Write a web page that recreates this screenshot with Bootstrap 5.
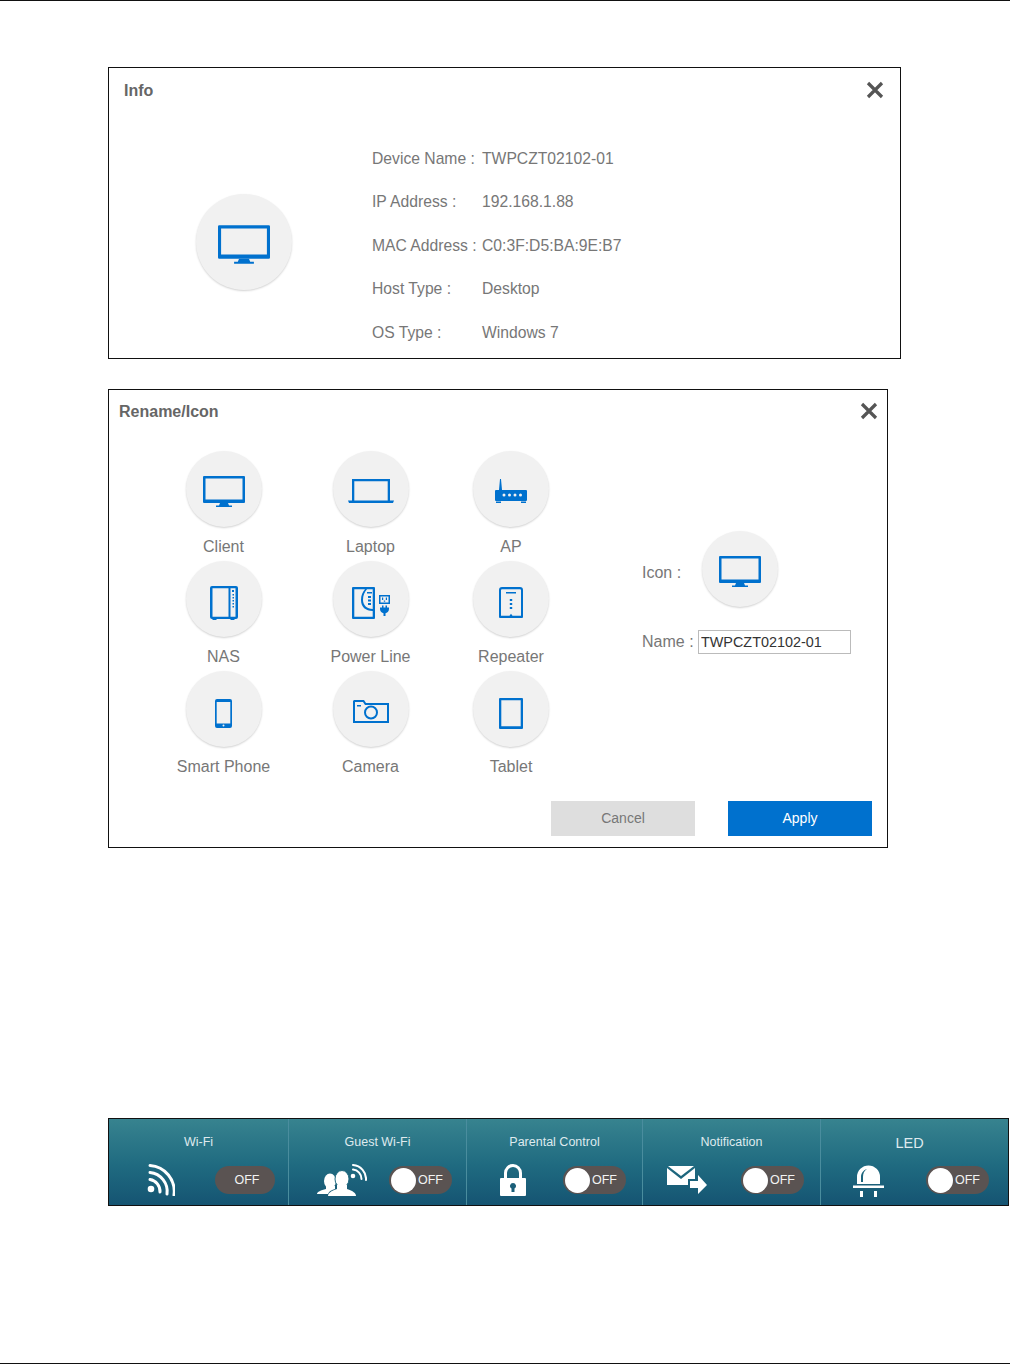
<!DOCTYPE html>
<html lang="en">
  <head>
    <meta charset="UTF-8" />
    <title>Device Info</title>
    <link href="https://cdn.jsdelivr.net/npm/bootstrap@5.3.3/dist/css/bootstrap.min.css" rel="stylesheet" />
    <style>
      body {
        margin: 0;
        background: #fff;
        font-family: "Liberation Sans", Arial, sans-serif;
        font-size: 16px;
        color: #777;
      }
      .page-rule { height: 1px; background: #111; }
      .page-body { padding-left: 108px; }
      .dlg { border: 1px solid #111; background: #fff; }
      .dlg-info { width: 793px; height: 292px; margin-top: 66px; }
      .dlg-rename { width: 780px; height: 459px; margin-top: 30px; }
      .info-head { height: 68px; padding: 13px 16px 0 15px; }
      .rename-head { height: 61px; padding: 12px 9px 0 10px; }
      .dlg-title { font-size: 16px; font-weight: 700; color: #666; line-height: 20px; }
      .close-x { width: 18px; height: 18px; stroke: #555; stroke-width: 3.2; }
      .dev-circle {
        background: #f1f1f1;
        border-radius: 50%;
        box-shadow: 0 1px 2px rgba(0, 0, 0, .18);
        color: #0071ce;
        flex: none;
      }
      .dev-circle svg { fill: currentColor; }
      .circle-lg { width: 96px; height: 96px; margin: 0 80px 7px 87px; padding-top: 6px; }
      .circle-md { width: 76px; height: 76px; margin: 0 1px 5px; padding-top: 4px; }
      .icon-low { margin-top: 4px; }
      .info-text { font-size: 15.7px; margin-top: 1px; }
      .info-row { height: 43.5px; }
      .info-label { width: 110px; }
      .icon-grid {
        display: grid;
        grid-template-columns: 151px 143px 138px;
        grid-auto-rows: 110px;
        margin-left: 39px;
      }
      .icon-cell { line-height: 30px; white-space: nowrap; }
      .side-form { margin-left: 62px; padding-top: 80px; }
      .side-label-a { width: 59px; padding-top: 3px; }
      .side-label-b { width: 56px; }
      .name-row { margin-top: 18px; }
      .name-input {
        width: 153px;
        height: 24px;
        padding: 0 2px;
        border: 1px solid #bbb;
        border-radius: 0;
        font-size: 14.4px;
        line-height: 22px;
        color: #333;
      }
      .dlg-actions { margin-top: 20px; padding-right: 15px; gap: 33px; }
      .act-btn {
        width: 144px;
        height: 35px;
        padding: 0;
        border: 0;
        border-radius: 0;
        font-size: 14px;
        line-height: 35px;
      }
      .act-cancel, .act-cancel:hover { background: #dedede; color: #777; }
      .act-apply, .act-apply:hover { background: #0071ce; color: #fff; }
      .dash {
        width: 901px;
        height: 88px;
        margin-top: 270px;
        border: 1px solid #111;
        background: linear-gradient(#37838f, #1f6a80 55%, #155472);
        color: #fff;
      }
      .dash-cell { border-right: 1px solid #4a8d9e; flex: none; }
      .dash-cell:last-child { border-right: 0; flex: 1; }
      .cell-wifi { width: 180px; }
      .cell-guest { width: 178px; }
      .cell-parent { width: 176px; }
      .cell-notify { width: 178px; }
      .dash-title { height: 45px; padding-top: 14px; font-size: 12.5px; line-height: 18px; color: #dfeaee; text-align: center; }
      .title-led { font-size: 14.5px; padding: 15px 10px 0 0; }
      .dash-row { height: 32px; }
      .dash-row svg { fill: #fff; flex: none; }
      .sw-off {
        position: relative;
        width: 63px;
        height: 28px;
        border-radius: 14px;
        background: #5a5352;
        font-size: 12.5px;
        line-height: 28px;
        text-align: right;
        padding-right: 9px;
        color: #f3f3f3;
        flex: none;
      }
      .sw-bare { width: 60px; padding: 0 0 0 4px; text-align: center; }
      .sw-knob {
        position: absolute;
        left: 2px;
        top: 1.5px;
        width: 25px;
        height: 25px;
        border-radius: 50%;
        background: #fff;
      }
      .row-wifi { padding-left: 38px; gap: 40px; }
      .row-guest { padding-left: 28px; gap: 22px; }
      .row-parent { padding-left: 33px; gap: 37px; }
      .row-notify { padding-left: 24px; gap: 34px; }
      .row-led { padding-left: 32px; gap: 42px; }
      .page-rule-end { margin-top: 157px; }
    </style>
  </head>
  <body>
    <svg width="0" height="0" class="d-block position-absolute">
      <defs>
        <symbol id="ic-monitor" viewBox="0 0 42 31">
          <path fill-rule="evenodd" d="M1 0h40a1 1 0 0 1 1 1v25a1 1 0 0 1-1 1H1a1 1 0 0 1-1-1V1a1 1 0 0 1 1-1zm1.500 2.500v21h37v-21z"/>
          <path d="M17 27h8l1 2.500h3V31H13v-1.500h3z"/>
        </symbol>
        <symbol id="ic-laptop" viewBox="0 0 46 24">
          <path fill-rule="evenodd" d="M4 0h38v22h-2.300V2.300H6.300V22H4z"/>
          <path d="M0 21.500h46l-1 2.500H1z"/>
        </symbol>
        <symbol id="ic-ap" viewBox="0 0 32 24">
          <path d="M5 0h1l1 11H4z"/>
          <path fill-rule="evenodd" d="M1 11h30a1 1 0 0 1 1 1v9a1 1 0 0 1-1 1H1a1 1 0 0 1-1-1v-9a1 1 0 0 1 1-1zm8 3.500a1.500 1.500 0 1 0 0 3 1.500 1.500 0 0 0 0-3zm5.500 0a1.500 1.500 0 1 0 0 3 1.500 1.500 0 0 0 0-3zm5.500 0a1.500 1.500 0 1 0 0 3 1.500 1.500 0 0 0 0-3zm5.500 0a1.500 1.500 0 1 0 0 3 1.500 1.500 0 0 0 0-3z"/>
          <path d="M1 22.500h5V24H1zM26 22.500h5V24h-5z"/>
        </symbol>
        <symbol id="ic-nas" viewBox="0 0 28 34">
          <path fill-rule="evenodd" d="M2 0h24a2 2 0 0 1 2 2v29a2 2 0 0 1-2 2h-1l-1 1h-3l-1-1H7l-1 1H3l-1-1a2 2 0 0 1-2-2V2a2 2 0 0 1 2-2zm.5 2.300v28.400h16V2.300zm18 0v28.400h5V2.300z"/>
          <path d="M22 4h2v2h-2zM22.500 8h1.500v1.500h-1.500zM22.500 11h1.500v1.500h-1.500zM22.500 14h1.500v1.500h-1.500zM22.500 17h1.500v1.500h-1.500zM22.500 20h1.500v1.500h-1.500z"/>
        </symbol>
        <symbol id="ic-powerline" viewBox="0 0 38 32">
          <path fill-rule="evenodd" d="M1 0h21a1 1 0 0 1 1 1v30a1 1 0 0 1-1 1H1a1 1 0 0 1-1-1V1a1 1 0 0 1 1-1zm1.300 2.300v27.400h18.400V24c-7 0-11.700-4-11.700-11 0-4.500 1.500-8 4-10.700zm12.700 0C12.500 5 11 8.500 11 13c0 5 4 9 9.700 9V2.300z"/>
          <path d="M15 5h5v1.500h-5zM16 9h3v2h-3zM16 12.500h3v2h-3zM16 16h3v2h-3z"/>
          <path fill-rule="evenodd" d="M27 8h11v9H27zm1.500 1.500v6h8v-6z"/>
          <path d="M30 10.500h1.200V13H30zM33.800 10.500H35V13h-1.200zM31.800 13.500h1.400v1.200h-1.400z"/>
          <path d="M30 18.500h1.500v2h2v-2H35v2h2V22c0 2.500-2 4-3.500 4.300V29h-2v-2.700C30 26 28 24.500 28 22v-1.500h2z"/>
        </symbol>
        <symbol id="ic-repeater" viewBox="0 0 24 32">
          <path fill-rule="evenodd" d="M3 0h18a3 3 0 0 1 3 3v27a1 1 0 0 1-1 1H1a1 1 0 0 1-1-1V3a3 3 0 0 1 3-3zm0 2.300a1 1 0 0 0-1 1v25.400h8.500l1.500-2 1.500 2H22V3.300a1 1 0 0 0-1-1z"/>
          <path d="M7 5h10v1.500H7zM10.800 12h2.400v2h-2.400zM10.800 16h2.400v2h-2.400zM10.800 20h2.400v2h-2.400z"/>
        </symbol>
        <symbol id="ic-phone" viewBox="0 0 17 29">
          <path fill-rule="evenodd" d="M2 0h13a2 2 0 0 1 2 2v25a2 2 0 0 1-2 2H2a2 2 0 0 1-2-2V2a2 2 0 0 1 2-2zm-.3 3v21.500h13.600V3zM8.500 25.500a1 1 0 1 0 0 2 1 1 0 0 0 0-2z"/>
        </symbol>
        <symbol id="ic-camera" viewBox="0 0 36 24">
          <path fill-rule="evenodd" d="M1 1h10l2 3h23v20H0V2zm1 3v18h32V6H12l-2-3H2z"/>
          <path d="M4 6h4v1.500H4z"/>
          <path fill-rule="evenodd" d="M18 6.500a7 7 0 1 1 0 14 7 7 0 0 1 0-14zm0 2a5 5 0 1 0 0 10 5 5 0 0 0 0-10z"/>
        </symbol>
        <symbol id="ic-tablet" viewBox="0 0 24 31">
          <path fill-rule="evenodd" d="M1 0h22a1 1 0 0 1 1 1v29a1 1 0 0 1-1 1H1a1 1 0 0 1-1-1V1a1 1 0 0 1 1-1zm1.300 2.300v26h19.400v-26z"/>
          <path d="M11 29h2v1h-2z"/>
        </symbol>
      </defs>
    </svg>

    <div class="page-rule"></div>

    <div class="page-body">
      <!-- Info dialog -->
      <div class="dlg dlg-info">
        <div class="info-head d-flex justify-content-between align-items-start">
          <span class="dlg-title">Info</span>
          <svg class="close-x" viewBox="0 0 18 18"><path d="M2 2l14 14M16 2L2 16"/></svg>
        </div>
        <div class="d-flex align-items-center">
          <div class="dev-circle circle-lg d-flex align-items-center justify-content-center">
            <svg width="52" height="39"><use href="#ic-monitor"/></svg>
          </div>
          <div class="info-text">
            <div class="info-row d-flex align-items-center"><span class="info-label">Device Name :</span><span>TWPCZT02102-01</span></div>
            <div class="info-row d-flex align-items-center"><span class="info-label">IP Address :</span><span>192.168.1.88</span></div>
            <div class="info-row d-flex align-items-center"><span class="info-label">MAC Address :</span><span>C0:3F:D5:BA:9E:B7</span></div>
            <div class="info-row d-flex align-items-center"><span class="info-label">Host Type :</span><span>Desktop</span></div>
            <div class="info-row d-flex align-items-center"><span class="info-label">OS Type :</span><span>Windows 7</span></div>
          </div>
        </div>
      </div>

      <!-- Rename/Icon dialog -->
      <div class="dlg dlg-rename">
        <div class="rename-head d-flex justify-content-between align-items-start">
          <span class="dlg-title">Rename/Icon</span>
          <svg class="close-x" viewBox="0 0 18 18"><path d="M2 2l14 14M16 2L2 16"/></svg>
        </div>
        <div class="d-flex">
          <div class="icon-grid">
            <div class="icon-cell d-flex flex-column align-items-center">
              <div class="dev-circle circle-md d-flex align-items-center justify-content-center"><svg width="42" height="31"><use href="#ic-monitor"/></svg></div>Client
            </div>
            <div class="icon-cell d-flex flex-column align-items-center">
              <div class="dev-circle circle-md d-flex align-items-center justify-content-center"><svg width="46" height="24"><use href="#ic-laptop"/></svg></div>Laptop
            </div>
            <div class="icon-cell d-flex flex-column align-items-center">
              <div class="dev-circle circle-md d-flex align-items-center justify-content-center"><svg width="32" height="24"><use href="#ic-ap"/></svg></div>AP
            </div>
            <div class="icon-cell d-flex flex-column align-items-center">
              <div class="dev-circle circle-md d-flex align-items-center justify-content-center"><svg class="icon-low" width="28" height="34"><use href="#ic-nas"/></svg></div>NAS
            </div>
            <div class="icon-cell d-flex flex-column align-items-center">
              <div class="dev-circle circle-md d-flex align-items-center justify-content-center"><svg class="icon-low" width="38" height="32"><use href="#ic-powerline"/></svg></div>Power Line
            </div>
            <div class="icon-cell d-flex flex-column align-items-center">
              <div class="dev-circle circle-md d-flex align-items-center justify-content-center"><svg class="icon-low" width="24" height="32"><use href="#ic-repeater"/></svg></div>Repeater
            </div>
            <div class="icon-cell d-flex flex-column align-items-center">
              <div class="dev-circle circle-md d-flex align-items-center justify-content-center"><svg class="icon-low" width="17" height="29"><use href="#ic-phone"/></svg></div>Smart Phone
            </div>
            <div class="icon-cell d-flex flex-column align-items-center">
              <div class="dev-circle circle-md d-flex align-items-center justify-content-center"><svg width="36" height="24"><use href="#ic-camera"/></svg></div>Camera
            </div>
            <div class="icon-cell d-flex flex-column align-items-center">
              <div class="dev-circle circle-md d-flex align-items-center justify-content-center"><svg class="icon-low" width="24" height="31"><use href="#ic-tablet"/></svg></div>Tablet
            </div>
          </div>
          <div class="side-form">
            <div class="d-flex align-items-center">
              <span class="side-label-a">Icon :</span>
              <div class="dev-circle circle-md d-flex align-items-center justify-content-center"><svg width="42" height="31"><use href="#ic-monitor"/></svg></div>
            </div>
            <div class="name-row d-flex align-items-center">
              <span class="side-label-b">Name :</span>
              <input class="form-control name-input" type="text" value="TWPCZT02102-01" />
            </div>
          </div>
        </div>
        <div class="dlg-actions d-flex justify-content-end">
          <button class="btn act-btn act-cancel" type="button">Cancel</button>
          <button class="btn act-btn act-apply" type="button">Apply</button>
        </div>
      </div>

      <!-- Status bar -->
      <div class="dash d-flex">
        <div class="dash-cell cell-wifi">
          <div class="dash-title">Wi-Fi</div>
          <div class="dash-row row-wifi d-flex align-items-center">
            <svg width="28" height="32" viewBox="0 0 28 32">
              <circle cx="4" cy="25" r="3.300"/>
              <path d="M3 1.500A26 26 0 0 1 27 31" fill="none" stroke="#fff" stroke-width="3" stroke-linecap="round"/>
              <path d="M3 8.500A19 19 0 0 1 20 30" fill="none" stroke="#fff" stroke-width="3" stroke-linecap="round"/>
              <path d="M3 15.500A12 12 0 0 1 13 28" fill="none" stroke="#fff" stroke-width="3" stroke-linecap="round"/>
            </svg>
            <div class="sw-off sw-bare">OFF</div>
          </div>
        </div>
        <div class="dash-cell cell-guest">
          <div class="dash-title">Guest Wi-Fi</div>
          <div class="dash-row row-guest d-flex align-items-center">
            <svg width="50" height="32" viewBox="0 0 50 32">
              <ellipse cx="13" cy="17" rx="6" ry="7.500"/>
              <path d="M9 22v3C4 26 0 28 0 30h11c1-3 4-4 7-5v-3z"/>
              <ellipse cx="25" cy="15" rx="7" ry="8.500" stroke="#1f6a80"/>
              <path d="M20 21v4c-6 2-9 4-9 7h28c0-3-3-5-9-7v-4z"/>
              <circle cx="36" cy="12" r="2.300"/>
              <path d="M36 1A14 14 0 0 1 49 16" fill="none" stroke="#fff" stroke-width="2" stroke-linecap="round"/>
              <path d="M36 5.500A9.500 9.500 0 0 1 44.500 15" fill="none" stroke="#fff" stroke-width="2" stroke-linecap="round"/>
            </svg>
            <div class="sw-off"><span class="sw-knob"></span>OFF</div>
          </div>
        </div>
        <div class="dash-cell cell-parent">
          <div class="dash-title">Parental Control</div>
          <div class="dash-row row-parent d-flex align-items-center">
            <svg width="26" height="32" viewBox="0 0 26 32">
              <path fill-rule="evenodd" d="M1 14h3V9a9 9 0 0 1 18 0v5h3a1 1 0 0 1 1 1v16a1 1 0 0 1-1 1H1a1 1 0 0 1-1-1V15a1 1 0 0 1 1-1zm6 0h12V9a6 6 0 0 0-12 0zm6 5a3 3 0 0 0-1.500 5.600V28h3v-3.400A3 3 0 0 0 13 19z"/>
            </svg>
            <div class="sw-off"><span class="sw-knob"></span>OFF</div>
          </div>
        </div>
        <div class="dash-cell cell-notify">
          <div class="dash-title">Notification</div>
          <div class="dash-row row-notify d-flex align-items-center">
            <svg width="40" height="28" viewBox="0 0 40 28">
              <path d="M1 0h26L14 10z"/>
              <path d="M0 2l14 11L28 2v11h-7v6H0z"/>
              <path d="M23 15h8V9l9 10-9 9v-6h-8z"/>
            </svg>
            <div class="sw-off"><span class="sw-knob"></span>OFF</div>
          </div>
        </div>
        <div class="dash-cell">
          <div class="dash-title title-led">LED</div>
          <div class="dash-row row-led d-flex align-items-center">
            <svg width="31" height="33" viewBox="0 0 31 33">
              <path fill-rule="evenodd" d="M4 20v-7a11.500 11.500 0 0 1 23 0v7zm4-2V13c0-4 2.500-7 6-8-2.800 1.500-4 4.500-4 8v5z"/>
              <path d="M0 21.500h31V24H0zM7 27h3v6H7zM21 27h3v6h-3z"/>
            </svg>
            <div class="sw-off"><span class="sw-knob"></span>OFF</div>
          </div>
        </div>
      </div>
    </div>

    <div class="page-rule page-rule-end"></div>

    <script src="https://cdn.jsdelivr.net/npm/bootstrap@5.3.3/dist/js/bootstrap.bundle.min.js"></script>
  </body>
</html>
